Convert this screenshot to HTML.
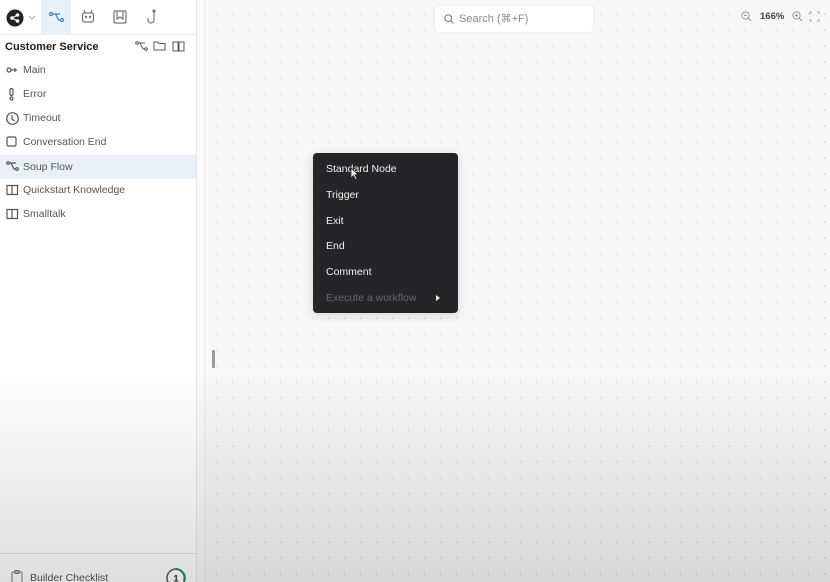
<!DOCTYPE html>
<html><head><meta charset="utf-8"><style>
*{box-sizing:border-box;margin:0;padding:0}
html,body{width:830px;height:582px;overflow:hidden}
body{font-family:"Liberation Sans",sans-serif;background:#f6f6f6;position:relative}
.canvas{position:absolute;left:205px;top:0;right:0;bottom:0;background-color:#f7f7f7;background-image:radial-gradient(circle,#d9d9d9 0.7px,transparent 1.1px);background-size:16px 16px;background-position:4px 6px}
.side{position:absolute;left:0;top:0;width:197px;height:582px;background:#fff;border-right:1px solid #e6e6e6}
.strip{position:absolute;left:197px;top:0;width:8px;height:582px;background:#fafafa;border-right:1px solid #ececec}
.tabs{height:35px;border-bottom:1px solid #eaeaea;position:relative}
.tab{position:absolute;top:0;height:35px;width:30px}
.title{position:absolute;left:5px;top:41px;font-size:11px;font-weight:bold;color:#222}
.item{position:absolute;left:0;width:196px;height:24px;font-size:10.5px;color:#555;line-height:25px;padding-left:23px}
.item svg{position:absolute;left:6px;top:6px}
.sel{background:#e9f0f8}
.search{position:absolute;left:435px;top:6px;width:158px;height:26px;background:#fff;border-radius:4px;box-shadow:0 0 3px rgba(0,0,0,.08);font-size:11px;color:#8a8a8a;line-height:26px;padding-left:24px}
.menu{position:absolute;left:313px;top:153px;width:145px;height:160px;background:#252527;border-radius:4px;box-shadow:0 2px 10px rgba(0,0,0,.15)}
.mi{position:absolute;left:13px;font-size:10.5px;color:#f2f2f2}
.shade{position:absolute;left:0;top:370px;width:830px;height:212px;background:linear-gradient(rgba(0,0,0,0),rgba(0,0,0,.13));pointer-events:none}
</style></head><body>
<div class="canvas"></div>
<div class="strip"><div style="position:absolute;left:15px;top:350px;width:3px;height:18px;background:#999;border-radius:1px"></div></div>
<div class="side">
 <div class="tabs">
  <svg style="position:absolute;left:6px;top:9px" width="18" height="18"><circle cx="9" cy="9" r="8.5" fill="#222"/><circle cx="6" cy="9" r="1.8" fill="#fff"/><circle cx="11.5" cy="6" r="1.8" fill="#fff"/><circle cx="11.5" cy="12" r="1.8" fill="#fff"/><path d="M6 9L11.5 6M6 9L11.5 12" stroke="#fff" stroke-width="1.2"/></svg>
  <svg style="position:absolute;left:28px;top:15px" width="8" height="6"><path d="M1 1l3 3 3-3" stroke="#aaa" fill="none"/></svg>
  <div class="tab" style="left:41px;background:#e9f0f8"></div>
  <svg style="position:absolute;left:49px;top:11px" width="16" height="12" fill="none" stroke="#3b82c4" stroke-width="1.2"><circle cx="2" cy="3" r="1.5"/><circle cx="13" cy="9" r="1.5"/><path d="M3.5 3h3l3 6h2M6 3h5"/></svg>
  <svg style="position:absolute;left:81px;top:9px" width="14" height="15" fill="none" stroke="#777" stroke-width="1.2"><rect x="1.5" y="4" width="11" height="9" rx="2"/><path d="M4 4L3 1M10 4l1-3"/><circle cx="5" cy="8" r=".6" fill="#777"/><circle cx="9" cy="8" r=".6" fill="#777"/></svg>
  <svg style="position:absolute;left:113px;top:10px" width="14" height="14" fill="none" stroke="#777" stroke-width="1.2"><rect x="1" y="1" width="12" height="12" rx="1"/><path d="M4 1v8l3-2 3 2V1"/></svg>
  <svg style="position:absolute;left:146px;top:9px" width="12" height="16" fill="none" stroke="#777" stroke-width="1.2"><path d="M8 1v10a3 3 0 0 1-6 0V9"/><circle cx="8" cy="2" r="1"/></svg>
 </div>
 <div class="title">Customer Service</div>
 <svg style="position:absolute;left:135px;top:41px" width="14" height="10" fill="none" stroke="#555"><circle cx="2" cy="2" r="1.3"/><circle cx="11" cy="8" r="1.3"/><path d="M3 2h2l3 6h2M5 2h5"/></svg>
 <svg style="position:absolute;left:153px;top:40px" width="14" height="12" fill="none" stroke="#555"><path d="M1 2h4l1 1.5h6V10H1z"/></svg>
 <svg style="position:absolute;left:172px;top:40px" width="14" height="12" fill="none" stroke="#555"><path d="M1 2h5v9H1zM7 2h5v9H7z"/></svg>
 <div class="item" style="top:58px"><svg width="12" height="12" fill="none" stroke="#555" stroke-width="1.2"><circle cx="3" cy="6" r="2"/><path d="M5 6h6M9 4v4"/></svg>Main</div>
 <div class="item" style="top:82px"><svg width="12" height="14" fill="none" stroke="#555" stroke-width="1.2"><rect x="4" y="0.5" width="3" height="7" rx="1.5"/><circle cx="5.5" cy="10.5" r="1.5"/></svg>Error</div>
 <div class="item" style="top:106px"><svg width="13" height="13" fill="none" stroke="#555" stroke-width="1.2"><circle cx="6.5" cy="6.5" r="5.8"/><path d="M6 3v4l2.5 2"/></svg>Timeout</div>
 <div class="item" style="top:130px"><svg width="12" height="12" fill="none" stroke="#555" stroke-width="1.2"><rect x="1" y="1" width="9" height="9" rx="1.5"/></svg>Conversation End</div>
 <div class="item sel" style="top:155px"><svg width="14" height="10" fill="none" stroke="#555" stroke-width="1.2"><circle cx="2" cy="2" r="1.3"/><circle cx="11" cy="8" r="1.3"/><path d="M3 2h2l3 6h2M5 2h5"/></svg>Soup Flow</div>
 <div class="item" style="top:178px"><svg width="13" height="12" fill="none" stroke="#555" stroke-width="1.2"><path d="M1 1.5h5v9H1zM6 1.5h5.5v9H6z"/></svg>Quickstart Knowledge</div>
 <div class="item" style="top:202px"><svg width="13" height="12" fill="none" stroke="#555" stroke-width="1.2"><path d="M1 1.5h5v9H1zM6 1.5h5.5v9H6z"/></svg>Smalltalk</div>
 <div style="position:absolute;left:0;top:553px;width:196px;border-top:1px solid #e4e4e4"></div>
 <svg style="position:absolute;left:11px;top:570px" width="12" height="14" fill="none" stroke="#777"><rect x="1" y="2" width="10" height="11" rx="1"/><rect x="4" y="0.5" width="4" height="3"/></svg>
 <div style="position:absolute;left:30px;top:572px;font-size:10.5px;color:#555">Builder Checklist</div>
 <svg style="position:absolute;left:165px;top:567px" width="22" height="22" fill="none"><circle cx="11" cy="11" r="9" stroke="#555" stroke-width="1.5"/><path d="M11 2a9 9 0 0 1 8 12" stroke="#1a8a6a" stroke-width="2"/><text x="11" y="14.5" font-size="9" font-weight="bold" text-anchor="middle" fill="#222" font-family="Liberation Sans">1</text></svg>
</div>
<div class="search"><svg style="position:absolute;left:9px;top:8px" width="10" height="10" fill="none" stroke="#888" stroke-width="1.2"><circle cx="4.2" cy="4.2" r="3.4"/><path d="M6.8 6.8L9.5 9.5"/></svg>Search (⌘+F)</div>
<svg style="position:absolute;left:741px;top:11px" width="11" height="11" fill="none" stroke="#999"><circle cx="4.5" cy="4.5" r="3.6"/><path d="M7 7l3 3M3 4.5h3"/></svg>
<div style="position:absolute;left:760px;top:11px;font-size:9.5px;font-weight:bold;color:#444">166%</div>
<svg style="position:absolute;left:792px;top:11px" width="11" height="11" fill="none" stroke="#999"><circle cx="4.5" cy="4.5" r="3.6"/><path d="M7 7l3 3M3 4.5h3M4.5 3v3"/></svg>
<svg style="position:absolute;left:809px;top:11px" width="11" height="11" fill="none" stroke="#aaa"><path d="M1 3V1h2M8 1h2v2M10 8v2H8M3 10H1V8"/></svg>
<div class="menu">
 <div class="mi" style="top:10px">Standard Node</div>
 <div class="mi" style="top:36px">Trigger</div>
 <div class="mi" style="top:62px">Exit</div>
 <div class="mi" style="top:87px">End</div>
 <div class="mi" style="top:113px">Comment</div>
 <div class="mi" style="top:139px;color:#66666a">Execute a workflow</div>
 <div style="position:absolute;left:123px;top:142px;width:0;height:0;border-left:4px solid #eee;border-top:3.5px solid transparent;border-bottom:3.5px solid transparent"></div>
 <svg style="position:absolute;left:37px;top:14px" width="10" height="14"><path d="M1 1v10l2.5-2.5 2 4 1.5-.7-2-4H8z" fill="#fff" stroke="#222" stroke-width=".8"/></svg>
</div>
<div class="shade"></div>
</body></html>
